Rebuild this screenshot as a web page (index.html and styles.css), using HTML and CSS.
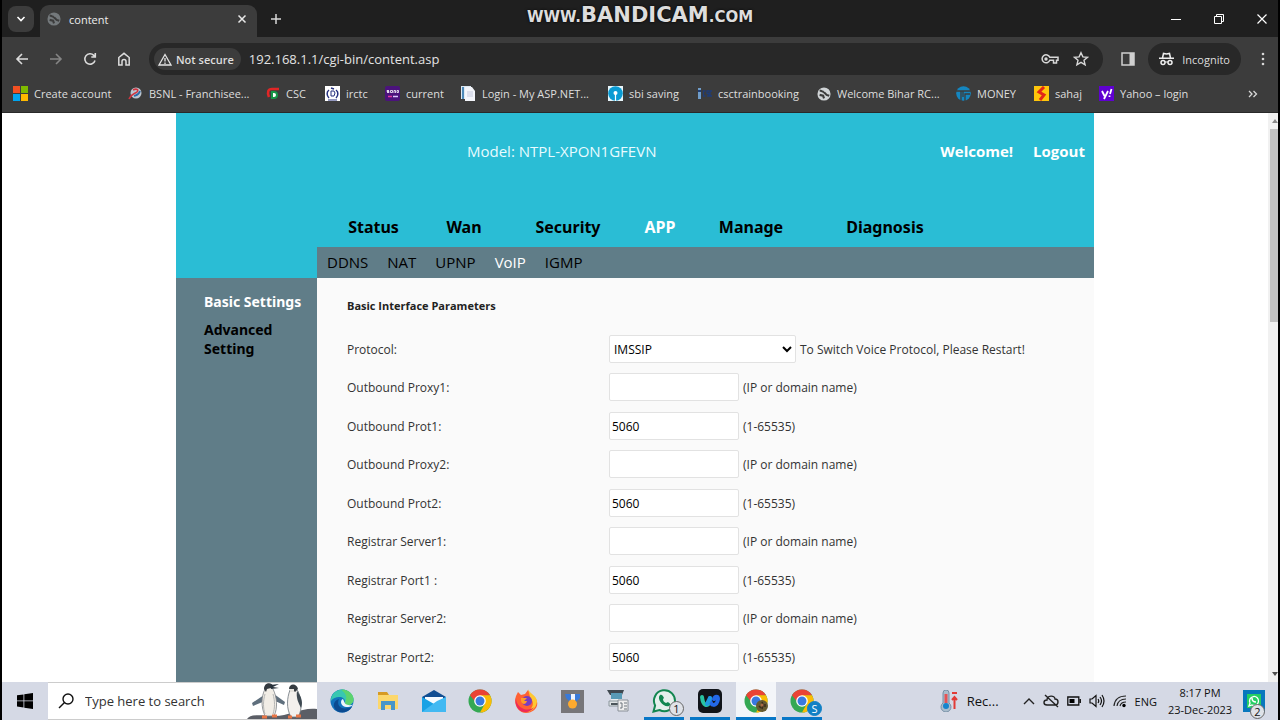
FILE: index.html
```html
<!DOCTYPE html>
<html lang="en">
<head>
<meta charset="utf-8">
<title>content</title>
<link rel="stylesheet" href="styles.css">
</head>
<body>
<div class="desktop">
  <header class="browser">
    <div class="tabstrip">
      <button class="tab-search" aria-label="Search tabs"><svg width="10" height="10" viewBox="0 0 10 10"><path d="M1.5 3l3.5 3.500 3.500-3.500" fill="none" stroke="#fff" stroke-width="1.600"/></svg></button>
      <div class="tab">
        <svg width="14" height="14" viewBox="0 0 16 16"><circle cx="8" cy="8" r="7.500" fill="#74797c"/><path d="M3 4c2 0 3 2 5 1.500M8 6l3 3 3 1M3 9l4 1 1 3" fill="none" stroke="#3c3c3c" stroke-width="2.400"/></svg>
        <span class="tab-title">content</span>
        <button class="icon-btn" aria-label="Close tab"><svg width="10" height="10" viewBox="0 0 10 10"><path d="M1.500 1.500l7 7m0-7l-7 7" stroke="#e8e8e8" stroke-width="1.500"/></svg></button>
      </div>
      <button class="icon-btn new-tab" aria-label="New tab"><svg width="12" height="12" viewBox="0 0 12 12"><path d="M6 1v10M1 6h10" stroke="#d8d8d8" stroke-width="1.500"/></svg></button>
      <div class="watermark"><span>WWW.</span><b>BANDICAM</b><span>.COM</span></div>
      <div class="win-controls">
        <button class="icon-btn" aria-label="Minimize"><svg width="12" height="12" viewBox="0 0 12 12"><path d="M1 6.500h10" stroke="#fff"/></svg></button>
        <button class="icon-btn" aria-label="Restore"><svg width="12" height="12" viewBox="0 0 12 12"><path d="M1.500 3.500h7v7h-7zM3.500 3V1.500h7v7H9" fill="none" stroke="#fff"/></svg></button>
        <button class="icon-btn" aria-label="Close"><svg width="12" height="12" viewBox="0 0 12 12"><path d="M1.500 1.500l9 9m0-9l-9 9" stroke="#fff" stroke-width="1.200"/></svg></button>
      </div>
    </div>
    <div class="toolbar">
      <button class="icon-btn" aria-label="Back"><svg width="14" height="14" viewBox="0 0 14 14"><path d="M13 7H2m5-5L2 7l5 5" fill="none" stroke="#dcdcdc" stroke-width="1.600"/></svg></button>
      <button class="icon-btn" aria-label="Forward"><svg width="14" height="14" viewBox="0 0 14 14"><path d="M1 7h11M7 2l5 5-5 5" fill="none" stroke="#858585" stroke-width="1.600"/></svg></button>
      <button class="icon-btn" aria-label="Reload"><svg width="14" height="14" viewBox="0 0 14 14"><path d="M12 8.500A5.200 5.200 0 1 1 10.800 3.400L12 4.700M12.300 1v4H8.300" fill="none" stroke="#dcdcdc" stroke-width="1.600"/></svg></button>
      <button class="icon-btn" aria-label="Home"><svg width="14" height="14" viewBox="0 0 14 14"><path d="M1.800 13V5.500L7 1.300l5.200 4.200V13H9V9.500a2 2 0 0 0-4 0V13z" fill="none" stroke="#dcdcdc" stroke-width="1.500"/></svg></button>
      <div class="omnibox">
        <button class="security"><svg width="14" height="13" viewBox="0 0 14 13"><path d="M7 1.500L13 12H1zM7 5v3.500M7 9.500V11" fill="none" stroke="#e4e4e4" stroke-width="1.300"/></svg>Not secure</button>
        <input class="url" type="text" aria-label="Address" value="192.168.1.1/cgi-bin/content.asp">
        <button class="icon-btn" aria-label="Passwords"><svg width="18" height="12" viewBox="0 0 18 12"><path d="M8.800 4.300H17v3h-1.500V10h-3V7.300H8.800a4 4 0 1 1 0-3z" fill="none" stroke="#d8d8d8" stroke-width="1.500"/><circle cx="5" cy="6" r="1.700" fill="#d8d8d8"/></svg></button>
        <button class="icon-btn" aria-label="Bookmark"><svg width="16" height="16" viewBox="0 0 16 16"><path d="M8 1.700l1.900 4.200 4.600.4-3.500 3 1.100 4.500L8 11.400l-4.100 2.400L5 9.300l-3.500-3 4.600-.4z" fill="none" stroke="#d8d8d8" stroke-width="1.400"/></svg></button>
      </div>
      <button class="icon-btn panel-btn" aria-label="Side panel"><svg width="14" height="14" viewBox="0 0 14 14"><path d="M1 1h12v12H1z" fill="none" stroke="#d0d0d0" stroke-width="1.500"/><path d="M8.500 1H13v12H8.500z" fill="#d0d0d0"/></svg></button>
      <button class="incognito"><svg width="15" height="14" viewBox="0 0 15 14"><path d="M0 6.200h15M3.500 6l1-4.500 3 .6 3-.6 1 4.500" fill="none" stroke="#eee" stroke-width="1.500"/><circle cx="4" cy="10.500" r="2" fill="none" stroke="#eee" stroke-width="1.500"/><circle cx="11" cy="10.500" r="2" fill="none" stroke="#eee" stroke-width="1.500"/><path d="M6 10h3" stroke="#eee"/></svg>Incognito</button>
      <button class="icon-btn menu-btn" aria-label="Menu"><svg width="4" height="14" viewBox="0 0 4 14" fill="#d8d8d8"><circle cx="2" cy="2" r="1.300"/><circle cx="2" cy="7" r="1.300"/><circle cx="2" cy="12" r="1.300"/></svg></button>
    </div>
    <nav class="bookmarks" aria-label="Bookmarks">
      <a href="#"><svg width="15" height="15" viewBox="0 0 15 15"><path d="M0 0h7v7H0z" fill="#f25022"/><path d="M8 0h7v7H8z" fill="#7fba00"/><path d="M0 8h7v7H0z" fill="#00a4ef"/><path d="M8 8h7v7H8z" fill="#ffb900"/></svg>Create account</a>
      <a href="#"><svg width="15" height="15" viewBox="0 0 15 15"><circle cx="8" cy="7" r="5.500" fill="#bcc6d0"/><path d="M5 4c4-2 6 0 4 2-2 2-5 1-8 7" fill="none" stroke="#cf3540" stroke-width="1.600"/><path d="M12 5c-1 4-3 4-6 5" fill="none" stroke="#2b69a8" stroke-width="1.600"/></svg>BSNL - Franchisee...</a>
      <a href="#"><svg width="14" height="15" viewBox="0 0 14 15"><path d="M13 3H6C2 3 1 6 3 11" fill="none" stroke="#e02626" stroke-width="2.600"/><path d="M6 6h2c4 0 4 6 0 6H6z" fill="#fff" stroke="#159447" stroke-width="2"/></svg>CSC</a>
      <a href="#"><svg width="15" height="15" viewBox="0 0 15 15"><path d="M0 0h15v15H0z" fill="#fff"/><path d="M6 2l3 1M4 4c-3 2-2 6 0 8M11 4c3 2 2 6 0 8" fill="none" stroke="#26317f" stroke-width="1.500"/><path d="M6 5h3l1 2-1 3H6z" fill="#fff" stroke="#26317f"/><path d="M3 14h9" stroke="#26317f"/></svg>irctc</a>
      <a href="#"><svg width="15" height="15" viewBox="0 0 15 15"><rect width="15" height="15" rx="2" fill="#4b137c"/><path d="M4 4.500H2v1h2v1H2M5.500 4.500h2v2h-2zM9 7V4.500h1.500V7M12 4.500h1.500v2H12z" fill="none" stroke="#fff" stroke-width=".8"/><path d="M3 10.500h4" stroke="#e23ca0" stroke-width="1.500"/><path d="M8 10.500h5" stroke="#dbc7ff" stroke-width="1.500"/></svg>current</a>
      <a href="#"><svg width="15" height="15" viewBox="0 0 15 15"><path d="M0 0h10v13H0z" fill="#dce8f2"/><path d="M2 1v12" stroke="#4c88b8" stroke-width="2"/><path d="M4 1h7l3 4v10H4z" fill="#f3f5fa"/><path d="M6 6h6M6 8h6M6 10h6" stroke="#c4c8dd"/></svg>Login - My ASP.NET...</a>
      <a href="#"><svg width="15" height="15" viewBox="0 0 15 15"><path d="M0 0h15v15H0z" fill="#e9f6fb"/><circle cx="7.500" cy="7.500" r="7.300" fill="#0a9bd3"/><circle cx="7.500" cy="7" r="2" fill="#fff"/><path d="M7.500 8v7" stroke="#fff" stroke-width="1.200"/></svg>sbi saving</a>
      <a href="#"><svg width="15" height="15" viewBox="0 0 15 15"><path d="M1 2h3v11H1z" fill="#6f9cc9"/><path d="M1 5h3" stroke="#203f77" stroke-width="2"/><path d="M8.500 5H6.500v5h2M12 5h-2v2.500h2V10h-2M15 5h-2v5h2" fill="none" stroke="#1f3c76" stroke-width="1.300"/></svg>csctrainbooking</a>
      <a href="#"><svg width="14" height="14" viewBox="0 0 16 16"><circle cx="8" cy="8" r="7.500" fill="#d0d4d6"/><path d="M3 4c2 0 3 2 5 1.500M8 6l3 3 3 1M3 9l4 1 1 3" fill="none" stroke="#3c3c3c" stroke-width="2.400"/></svg>Welcome Bihar RC...</a>
      <a href="#"><svg width="15" height="15" viewBox="0 0 15 15"><circle cx="7.500" cy="7.500" r="7.300" fill="#1486c0"/><path d="M0 5h15M5 5v10M9 15V8h5M7 5v6" fill="none" stroke="#3c3c3c" stroke-width="1.300"/></svg>MONEY</a>
      <a href="#"><svg width="15" height="15" viewBox="0 0 15 15"><path d="M0 0h15v15H0z" fill="#ffc60b"/><path d="M10 1L5 6l5 3-4 5" fill="none" stroke="#e22618" stroke-width="3"/></svg>sahaj</a>
      <a href="#"><svg width="15" height="15" viewBox="0 0 15 15"><path d="M0 0h15v15H0z" fill="#5f01d1"/><path d="M3 5l2.500 5M9 5l-4 8M12.500 3l-1.500 5M10.500 9.500v1.500" stroke="#fff" stroke-width="1.800"/></svg>Yahoo – login</a>
      <button class="icon-btn" aria-label="More bookmarks"><svg width="10" height="8" viewBox="0 0 10 8"><path d="M1 1l3 3-3 3M5.500 1l3 3-3 3" fill="none" stroke="#d8d8d8" stroke-width="1.300"/></svg></button>
    </nav>
  </header>

  <div class="viewport">
    <div class="page">
      <header class="site-head">
        <div class="identity">
          <span class="model">Model: NTPL-XPON1GFEVN</span>
          <span class="account"><span>Welcome!</span><a href="#">Logout</a></span>
        </div>
        <nav class="main-nav" aria-label="Main">
          <a href="#">Status</a><a href="#">Wan</a><a href="#">Security</a><a href="#" class="active">APP</a><a href="#">Manage</a><a href="#">Diagnosis</a>
        </nav>
        <nav class="sub-nav" aria-label="APP">
          <a href="#">DDNS</a><a href="#">NAT</a><a href="#">UPNP</a><a href="#" class="active">VoIP</a><a href="#">IGMP</a>
        </nav>
      </header>
      <div class="columns">
        <nav class="side-nav" aria-label="VoIP">
          <a href="#" class="active">Basic Settings</a>
          <a href="#">Advanced Setting</a>
        </nav>
        <main class="content">
          <h1>Basic Interface Parameters</h1>
          <form class="params">
            <div class="row"><label for="proto">Protocol:</label><div><select id="proto"><option>IMSSIP</option></select><span>To Switch Voice Protocol, Please Restart!</span></div></div>
            <div class="row"><label for="op1">Outbound Proxy1:</label><div><input id="op1" type="text"><span>(IP or domain name)</span></div></div>
            <div class="row"><label for="opt1">Outbound Prot1:</label><div><input id="opt1" type="text" value="5060"><span>(1-65535)</span></div></div>
            <div class="row"><label for="op2">Outbound Proxy2:</label><div><input id="op2" type="text"><span>(IP or domain name)</span></div></div>
            <div class="row"><label for="opt2">Outbound Prot2:</label><div><input id="opt2" type="text" value="5060"><span>(1-65535)</span></div></div>
            <div class="row"><label for="rs1">Registrar Server1:</label><div><input id="rs1" type="text"><span>(IP or domain name)</span></div></div>
            <div class="row"><label for="rp1">Registrar Port1 :</label><div><input id="rp1" type="text" value="5060"><span>(1-65535)</span></div></div>
            <div class="row"><label for="rs2">Registrar Server2:</label><div><input id="rs2" type="text"><span>(IP or domain name)</span></div></div>
            <div class="row"><label for="rp2">Registrar Port2:</label><div><input id="rp2" type="text" value="5060"><span>(1-65535)</span></div></div>
          </form>
        </main>
      </div>
    </div>
    <div class="scrollbar">
      <svg width="8" height="16" viewBox="0 0 8 16"><path d="M2 10l3-4 3 4z" fill="#8a8a8a"/></svg>
      <div class="thumb"></div>
      <svg class="down" width="8" height="16" viewBox="0 0 8 16"><path d="M2 6l3 4 3-4z" fill="#505050"/></svg>
    </div>
  </div>

  <footer class="taskbar">
    <button class="start" aria-label="Start"><svg width="16" height="16" viewBox="0 0 16 16"><path d="M0 2.300L6.500 1.400v6.100H0zM7.300 1.300L16 0v7.500H7.300zM0 8.300h6.500v6.200L0 13.600zM7.300 8.300H16V16l-8.700-1.300z"/></svg></button>
    <label class="search">
      <svg width="16" height="16" viewBox="0 0 16 16"><circle cx="10" cy="6" r="5" fill="none" stroke="#111" stroke-width="1.400"/><path d="M6.500 9.500L1 15" stroke="#111" stroke-width="1.400"/></svg>
      <input type="text" placeholder="Type here to search" aria-label="Type here to search">
      <svg class="penguins" width="70" height="37" viewBox="0 0 70 37"><path d="M0 37c3-5 12-4 26-3s28-9 44-7v10z" fill="#5b5e66"/><path d="M17 13L5 21l1 3 12-5M27 12l11 8-1 3-11-5" fill="#5f6f7d"/><path d="M18 7q4-4 8 0c4 8 5 19 1 27H18c-4-9-4-19 0-27z" fill="#f1ede6" stroke="#7d8388" stroke-width=".8"/><path d="M17 7c0-7 8-7 9-3l-2 2-4 1-1 3z" fill="#343a40"/><path d="M23 3l9-1-6 3 6 1-8 1z" fill="#28323c"/><path d="M18 12c-2 7-2 14 0 20M26 12c2 7 2 14 0 20" fill="none" stroke="#b5b6b5"/><path d="M43 8q4-3 8 1c3 8 5 18 0 26h-7c-5-9-4-19-1-27z" fill="#f3f0ed" stroke="#6b737b" stroke-width=".8"/><path d="M50 9c5 6 6 12 4 17-3-6-5-10-4-17z" fill="#3e4952"/><path d="M42 7c0-6 8-6 9 0l-3 3-2-2z" fill="#363c42"/><path d="M43 7h4v3h-4z" fill="#e5e2dd"/><path d="M15 35h5M25 34h5M41 35h4M49 34h5" stroke="#e87545" stroke-width="3"/></svg>
    </label>
    <div class="apps">
      <button aria-label="Edge"><svg width="24" height="24" viewBox="0 0 24 24"><circle cx="12" cy="12" r="11.500" fill="#1273bd"/><path d="M1 10C2 4 7 .5 12 .5 19 .5 24 6 23.500 11c-.5 4-4 6-8 5-2-1-1-2-.5-3 0-3-2-5-6-5-3 0-6 1-8 4z" fill="#38c7b1"/><path d="M12 .5C19 .5 24 6 23.500 11c-.5 4-4 6-8 5-1-1 0-2 0-4 2-4 0-8-4-11z" fill="#5dd36e"/><path d="M9 10c-3 6 2 11 9 9 2 0 3-1 4-1-3 5-10 7-15 4-5-4-4-10 2-12z" fill="#0b4b91"/><path d="M13 10c-3 1-3 7 3 8 3 0 5-.5 6-1.500 1-1 1-1 1-1-2 1-6 1-8-1z" fill="#edf5fa"/></svg></button>
      <button aria-label="File Explorer"><svg width="22" height="22" viewBox="0 0 22 22"><path d="M1 2h9l2 3H1z" fill="#d69a23"/><path d="M1 5h20v14H1z" fill="#fcd76b"/><path d="M4 11h14v9h-4v-5H8v5H4z" fill="#4796c9"/></svg></button>
      <button aria-label="Mail"><svg width="24" height="24" viewBox="0 0 24 24"><path d="M0 8L12 1l12 7v5H0z" fill="#124e92"/><path d="M3 8h18v7H3z" fill="#f6fbff"/><path d="M0 8l12 7 12-7v15H0z" fill="#19a2e5"/><path d="M0 23L15 12l9-4v15z" fill="#42b9f2"/></svg></button>
      <button aria-label="Chrome"><svg width="24" height="24" viewBox="0 0 24 24"><circle cx="12" cy="12" r="11.500" fill="#34a853"/><path d="M2 6.200A11.500 11.500 0 0 1 22 6.200L12 7l-3 8z" fill="#ea4335"/><path d="M22 6.200A11.500 11.500 0 0 1 12 23.500l5-9-5-8.300z" fill="#fbbc05"/><circle cx="12" cy="12" r="5.800" fill="#fff"/><circle cx="12" cy="12" r="4.500" fill="#3979df"/></svg></button>
      <button aria-label="Firefox"><svg width="24" height="24" viewBox="0 0 24 24"><path d="M2 7l2-4 3 3 4-1 3-4c2 4 6 5 8 9 4 7-2 14-10 14C4 24-1 15 2 7z" fill="#ff6133"/><path d="M14 0c2 5 8 6 9 12 0 5-4 10-9 11 5-5 7-9 2-15z" fill="#ffc832"/><path d="M2 9c0 4 2 8 6 10 5 3 10 1 12-1-2 4-6 5-9 5C4 23 0 15 2 9z" fill="#ed2a57"/><circle cx="13" cy="12" r="5" fill="#793dbe"/><path d="M7 9h6l-3 3h3c-1 4-5 4-6 0z" fill="#ff9c26"/></svg></button>
      <button aria-label="Medal"><svg width="23" height="23" viewBox="0 0 23 23"><path d="M0 0h23v23H0z" fill="#777679"/><path d="M4 4h5l5 8H9L5 8zM14 4h5v4l-4 4h-5z" fill="#397ad9"/><path d="M10 4h4v7h-4z" fill="#edf3ff"/><circle cx="11.500" cy="14" r="4.500" fill="#fdaa2f"/></svg></button>
      <button aria-label="Scanner"><svg width="24" height="24" viewBox="0 0 24 24"><path d="M1 1h17l-2 5H4z" fill="#404950"/><path d="M5 4h11v9H5z" fill="#589ab5"/><path d="M5 10h11v2H5z" fill="#e8edef"/><path d="M3 12h14v5H3z" fill="#dfe4e6" stroke="#8b969c"/><path d="M5 14h7v2H5z" fill="#4b555b"/><path d="M12 11h10v11H12z" fill="#eee" stroke="#899098"/><path d="M14 14h2v5h-2M18 14h3M18 17h3M18 20h3" fill="none" stroke="#6c757d"/></svg></button>
      <button class="running" aria-label="WhatsApp"><svg width="24" height="24" viewBox="0 0 24 24"><path d="M1.500 22.500l1.600-6a10.500 10.500 0 1 1 4.400 4.500z" fill="#e5f0ec" stroke="#128650" stroke-width="2"/><path d="M8 6c-4 4 4 13 9 11 3-2 0-3-1-4l-2 1c-2-1-3-2-3-4l1-1C11 7 10 5 8 6z" fill="#128650"/></svg><span class="badge">1</span></button>
      <button class="running" aria-label="Webex"><svg width="24" height="24" viewBox="0 0 24 24"><rect width="24" height="24" rx="5" fill="#111419"/><path d="M4 8c1 9 5 10 8 5" fill="none" stroke="#28c4a2" stroke-width="4" stroke-linecap="round"/><path d="M12 9c0 9 7 9 8 1 0-3-3-3-4 0" fill="none" stroke="#2368e8" stroke-width="4" stroke-linecap="round"/><path d="M9 15l3-6" stroke="#1f9ae0" stroke-width="4" stroke-linecap="round"/></svg></button>
      <button class="running current" aria-label="Chrome incognito"><svg width="24" height="24" viewBox="0 0 24 24"><circle cx="12" cy="12" r="11.500" fill="#34a853"/><path d="M2 6.200A11.500 11.500 0 0 1 22 6.200L12 7l-3 8z" fill="#ea4335"/><path d="M22 6.200A11.500 11.500 0 0 1 12 23.500l5-9-5-8.300z" fill="#fbbc05"/><circle cx="12" cy="12" r="5.800" fill="#fff"/><circle cx="12" cy="12" r="4.500" fill="#3979df"/><circle cx="18" cy="17" r="6" fill="#665a30"/><path d="M18 13l1 3-1 4M15 17l2 2M21 15v3" stroke="#3a2c1c" stroke-width="1.500"/><circle cx="18" cy="16" r="1.500" fill="#a86a45"/></svg></button>
      <button class="running" aria-label="Chrome profile S"><svg width="24" height="24" viewBox="0 0 24 24"><circle cx="12" cy="12" r="11.500" fill="#34a853"/><path d="M2 6.200A11.500 11.500 0 0 1 22 6.200L12 7l-3 8z" fill="#ea4335"/><path d="M22 6.200A11.500 11.500 0 0 1 12 23.500l5-9-5-8.300z" fill="#fbbc05"/><circle cx="12" cy="12" r="5.800" fill="#fff"/><circle cx="12" cy="12" r="4.500" fill="#3979df"/></svg><span class="badge profile">S</span></button>
    </div>
    <div class="tray">
      <button class="weather"><svg width="18" height="22" viewBox="0 0 18 22"><path d="M3 3a3 3 0 0 1 6 0v10a5 5 0 1 1-6 0z" fill="#a9bdcc" stroke="#7790a6"/><path d="M6 4v9" stroke="#e65354" stroke-width="3"/><circle cx="6" cy="16" r="3" fill="#1684cc"/><path d="M12 3h5M14.500 19V7M12 10l2.500-3 2.500 3" fill="none" stroke="#e23b37" stroke-width="2"/></svg>Rec...</button>
      <button aria-label="Show hidden icons"><svg width="12" height="8" viewBox="0 0 12 8"><path d="M1 7l5-5 5 5" fill="none" stroke="#222" stroke-width="1.400"/></svg></button>
      <button aria-label="OneDrive"><svg width="16" height="14" viewBox="0 0 16 14"><path d="M4 11C0 11 0 6 4 6c0-5 8-5 8-1 4 0 4 6 0 6zM2 1l13 12" fill="none" stroke="#222" stroke-width="1.400"/></svg></button>
      <button aria-label="Battery"><svg width="14" height="10" viewBox="0 0 14 10"><path d="M.8 1h11v8H.8zM13.300 3v4" fill="none" stroke="#111" stroke-width="1.300"/><path d="M2.500 3h5v4h-5z"/></svg></button>
      <button aria-label="Volume"><svg width="16" height="14" viewBox="0 0 16 14"><path d="M1 5h2l4-3.500v11L3 9H1zM9 5q1.500 2 0 4M11 3q3 4 0 8M13 1q4 6 0 12" fill="none" stroke="#111" stroke-width="1.200"/></svg></button>
      <button aria-label="Network"><svg width="14" height="14" viewBox="0 0 14 14"><path d="M1 12Q2 2 13 2M4 12q1-7 9-7M7 12q1-4 6-4" fill="none" stroke="#222" stroke-width="1.200"/><circle cx="11" cy="11.500" r="1.700"/></svg></button>
      <button class="lang">ENG</button>
      <button class="clock"><span>8:17 PM</span><span>23-Dec-2023</span></button>
      <button class="notify" aria-label="Notifications"><svg width="22" height="22" viewBox="0 0 22 22"><path d="M0 0h22v22H0z" fill="#0877bd"/><path d="M4 4h14v14H4z" fill="#25ce63"/><path d="M6 16l1-3a4.500 4.500 0 1 1 2 2z" fill="none" stroke="#fff" stroke-width="1.300"/><path d="M9 8c0 3 2 4 4 4" fill="none" stroke="#fff" stroke-width="1.500"/></svg><span class="badge">2</span></button>
    </div>
  </footer>
</div>
</body>
</html>
```
FILE: styles.css
```css
* { box-sizing: border-box; }
body {
  margin: 0;
  background: #000;
  font-family: "Open Sans", "Noto Sans", sans-serif;
  font-size: 12px;
}
button, input, select { font: inherit; }
button { border: 0; padding: 0; background: none; color: inherit; }
a { color: inherit; text-decoration: none; }
svg { display: block; flex: none; }

.desktop {
  display: grid;
  grid-template-rows: auto minmax(0, 1fr) 38px;
  height: 100vh;
  padding: 0 2px;
}

/* Browser chrome */
.browser { background: #3c3c3c; color: #dedede; border-bottom: 1px solid #292929; font-size: 11px; }
.tabstrip {
  position: relative;
  display: flex;
  align-items: center;
  height: 37px;
  padding-left: 6px;
  background: #1f1f1f;
}
.tab-search {
  display: grid;
  place-items: center;
  width: 26px;
  height: 26px;
  border-radius: 8px;
  background: #3c3c3c;
}
.tab {
  display: flex;
  align-items: center;
  align-self: flex-end;
  gap: 8px;
  width: 217px;
  height: 32px;
  margin-left: 6px;
  padding: 0 10px 4px 7px;
  border-radius: 9px 9px 0 0;
  background: #3c3c3c;
}
.tab-title { flex: 1; color: #eee; }
.icon-btn { display: grid; place-items: center; }
.new-tab { margin-left: 13px; }
.watermark {
  position: absolute;
  top: 0;
  left: 0;
  right: 0;
  display: flex;
  align-items: baseline;
  justify-content: center;
  line-height: 30px;
  font-family: "DejaVu Sans", sans-serif;
  font-weight: bold;
  font-size: 15px;
  color: #ddd;
  text-shadow: 0 0 3px #000;
}
.watermark b { font-size: 21px; }
.win-controls { display: flex; gap: 31px; margin-left: auto; padding-right: 10px; }

.toolbar { display: flex; align-items: center; gap: 20px; height: 44px; padding: 0 13px; }
.omnibox {
  display: flex;
  align-items: center;
  flex: 1;
  gap: 14px;
  height: 32px;
  margin-left: -2px;
  padding: 0 14px 0 5px;
  border-radius: 16px;
  background: #282828;
}
.security {
  display: flex;
  align-items: center;
  gap: 4px;
  height: 22px;
  padding: 0 7px 0 4px;
  border-radius: 11px;
  background: #3c3c3c;
  font-weight: 600;
}
.url {
  flex: 1;
  min-width: 0;
  margin-left: -6px;
  padding: 0;
  border: 0;
  outline: 0;
  background: none;
  color: #e3e3e3;
  font-size: 13px;
}
.panel-btn { margin-left: -2px; }
.incognito {
  display: flex;
  align-items: center;
  gap: 8px;
  height: 32px;
  margin-left: -7px;
  padding: 0 11px;
  border-radius: 16px;
  background: #282828;
}
.bookmarks {
  display: grid;
  grid-template-columns: 115px 138px 59px 60px 76px 147px 89px 120px 139px 78px 65px 1fr auto;
  align-items: center;
  height: 31px;
  padding: 0 20px 6px 11px;
  white-space: nowrap;
}
.bookmarks a { display: flex; align-items: center; gap: 6px; }

/* Router page */
.viewport { display: flex; overflow: hidden; background: #fff; }
.page {
  display: flex;
  flex-direction: column;
  width: 918px;
  max-width: 100%;
  margin: 0 auto;
}
.site-head { flex: none; padding-left: 141px; background: #2abdd5; }
.identity {
  display: flex;
  justify-content: space-between;
  align-items: center;
  height: 76px;
  padding: 0 9px 0 150px;
  color: #e8fbff;
  font-size: 15px;
}
.account { display: flex; gap: 20px; font-weight: bold; color: #fff; }
.main-nav {
  display: grid;
  grid-template-columns: 113px 68px 140px 44px 138px 130px;
  align-items: center;
  height: 58px;
  padding-top: 18px;
  text-align: center;
  font-family: "Noto Sans", sans-serif;
  font-size: 16px;
  font-weight: bold;
}
.sub-nav {
  display: flex;
  align-items: center;
  gap: 19px;
  height: 31px;
  padding: 0 0 2px 10px;
  background: #607d88;
  font-size: 15px;
}
.active { color: #fff; }
.columns { display: flex; flex: 1; min-height: 0; }
.side-nav {
  flex: none;
  display: flex;
  flex-direction: column;
  gap: 9px;
  width: 141px;
  padding: 14px 0 0 28px;
  background: #607d88;
  font-family: "Noto Sans", sans-serif;
  font-size: 14px;
  font-weight: bold;
  line-height: 19px;
}
.content { flex: 1; padding: 19px 0 0 30px; background: #fafafa; color: #333; }
.content h1 { margin: 0 0 15px; color: #222; font-size: 11px; line-height: 18px; }
.row { display: grid; grid-template-columns: 262px 1fr; align-items: center; height: 38px; }
.row:nth-child(even) { margin-bottom: 1px; }
.row > div { display: flex; align-items: center; gap: 4px; }
.row input, .row select {
  width: 130px;
  height: 28px;
  padding: 0 2px;
  border: 1px solid #e2e2e2;
  border-radius: 2px;
  background: #fff;
  color: #000;
}
.row select { width: 187px; padding: 0; }

.scrollbar { display: flex; flex-direction: column; width: 10px; padding-left: 2px; background: #f1f1f1; }
.thumb { height: 34%; background: #c1c1c1; }
.down { margin-top: auto; }

/* Windows taskbar */
.taskbar { display: flex; background: #d5d9e5; color: #111; font-size: 11px; }
.taskbar button { position: relative; display: grid; place-items: center; }
.taskbar .start { width: 46px; }
.search {
  display: flex;
  align-items: center;
  gap: 11px;
  width: 269px;
  padding-left: 10px;
  border: 1px solid #ccc;
  border-width: 1px 0;
  background: #fff;
}
.search input {
  flex: 1;
  min-width: 0;
  padding: 0;
  border: 0;
  outline: 0;
  font-size: 13px;
}
.search input::placeholder { color: #333; }
.penguins { align-self: flex-end; }
.apps { display: flex; gap: 6px; padding-left: 5px; }
.apps button { width: 40px; }
.taskbar .running { border-bottom: 3px solid #0877c7; padding-top: 3px; }
.current { background: #f3f5f9; }
.badge {
  position: absolute;
  right: 0;
  bottom: 1px;
  display: grid;
  place-items: center;
  width: 15px;
  height: 15px;
  border: 1px solid #666;
  border-radius: 50%;
  background: #dfe2e8;
  color: #111;
  line-height: 13px;
}
.profile { border-color: #1180c5; background: #1180c5; color: #fff; }
.tray { display: flex; gap: 8px; margin-left: auto; padding-right: 13px; }
.taskbar .weather { display: flex; align-items: center; gap: 9px; margin-right: 16px; font-size: 13px; }
.clock { min-width: 70px; align-content: center; line-height: 17px; }
```
